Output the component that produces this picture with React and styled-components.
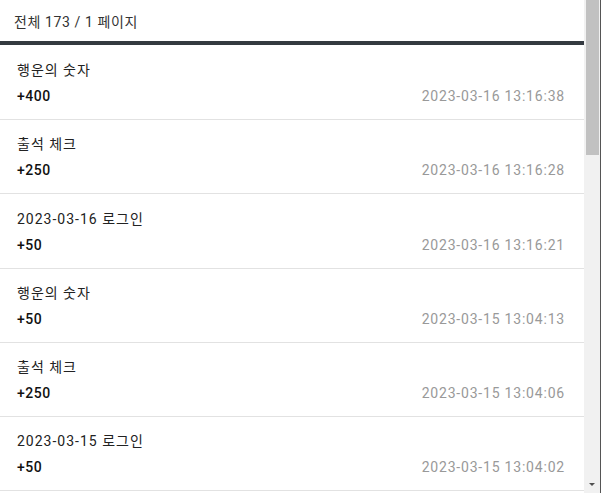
import React from "react";
import styled, { createGlobalStyle } from "styled-components";

const GlobalStyle = createGlobalStyle`
  html, body {
    margin: 0;
    padding: 0;
    background: #ffffff;
  }
  body {
    font-family: Roboto, "Noto Sans CJK KR", sans-serif;
  }
`;

const points = [
  { title: "행운의 숫자", amount: "+400", date: "2023-03-16 13:16:38" },
  { title: "출석 체크", amount: "+250", date: "2023-03-16 13:16:28" },
  { title: "2023-03-16 로그인", amount: "+50", date: "2023-03-16 13:16:21" },
  { title: "행운의 숫자", amount: "+50", date: "2023-03-15 13:04:13" },
  { title: "출석 체크", amount: "+250", date: "2023-03-15 13:04:06" },
  { title: "2023-03-15 로그인", amount: "+50", date: "2023-03-15 13:04:02" },
];

export default function App() {
  return (
    <>
      <GlobalStyle />
      <Frame>
        <Content>
          <Summary>전체 173 / 1 페이지</Summary>
          <List>
            {points.map((p, i) => (
              <Item key={i}>
                <ItemTitle>{p.title}</ItemTitle>
                <ItemBottom>
                  <Amount>{p.amount}</Amount>
                  <DateText>{p.date}</DateText>
                </ItemBottom>
              </Item>
            ))}
          </List>
        </Content>
        <ScrollBar>
          <Thumb />
          <ArrowDown />
        </ScrollBar>
      </Frame>
    </>
  );
}

const Frame = styled.div`
  width: 601px;
  height: 493px;
  display: flex;
  overflow: hidden;
  box-sizing: border-box;
  border-right: 1px solid #555;
`;

const Content = styled.div`
  flex: 1;
  display: flex;
  flex-direction: column;
  overflow: hidden;
`;

const Summary = styled.div`
  height: 41px;
  flex-shrink: 0;
  display: flex;
  align-items: center;
  padding-left: 14px;
  font-size: 14px;
  letter-spacing: 0.6px;
  color: #333;
  border-bottom: 4px solid #343a40;
`;

const List = styled.ul`
  list-style: none;
  margin: 0;
  padding: 1px 0 0;
`;

const Item = styled.li`
  padding: 14.2px 19px 13px 17px;
  border-bottom: 1px solid #e2e2e2;
`;

const ItemTitle = styled.div`
  font-size: 14px;
  line-height: 20px;
  letter-spacing: 1px;
  color: #222;
  margin-bottom: 6px;
`;

const ItemBottom = styled.div`
  display: flex;
  justify-content: space-between;
  align-items: center;
  line-height: 20px;
`;

const Amount = styled.span`
  font-size: 14px;
  font-weight: 500;
  letter-spacing: 0.5px;
  color: #111;
`;

const DateText = styled.span`
  font-size: 14px;
  letter-spacing: 0.8px;
  color: #999;
`;

const ScrollBar = styled.div`
  width: 16px;
  flex-shrink: 0;
  background: #f1f1f1;
  display: flex;
  flex-direction: column;
  align-items: center;
  justify-content: space-between;
  padding-bottom: 7px;
  box-sizing: border-box;
`;

const Thumb = styled.div`
  width: 13px;
  height: 155px;
  background: #c1c1c1;
`;

const ArrowDown = styled.div`
  width: 0;
  height: 0;
  border-left: 3px solid transparent;
  border-right: 3px solid transparent;
  border-top: 3px solid #505050;
`;
